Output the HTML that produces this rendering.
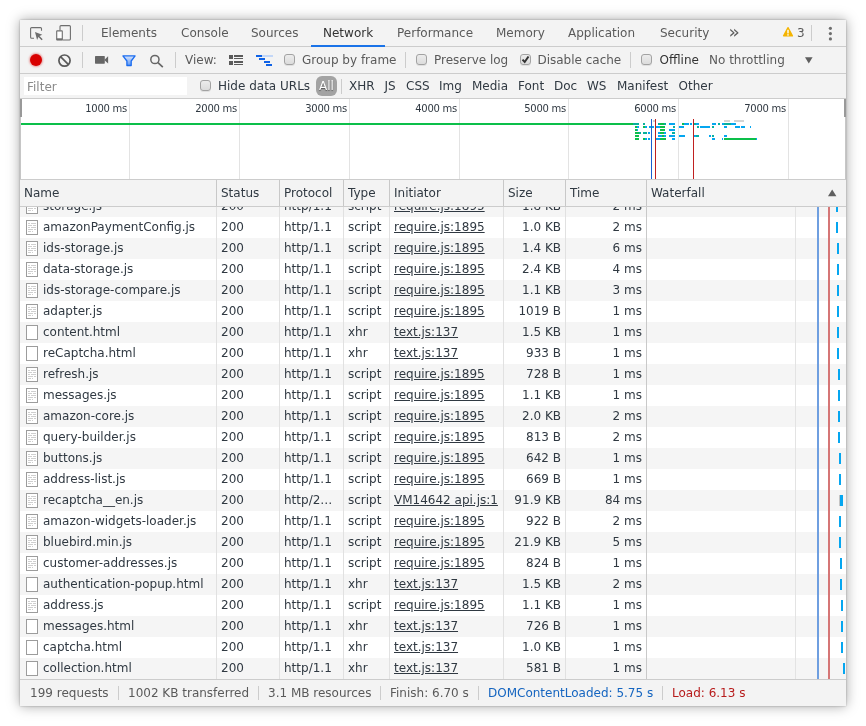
<!DOCTYPE html>
<html><head><meta charset="utf-8"><title>DevTools Network</title>
<style>
html,body{margin:0;padding:0;background:#fff;}
body{width:866px;height:726px;overflow:hidden;position:relative;font-family:"DejaVu Sans","Liberation Sans",sans-serif;font-size:12px;color:#303942;}
#win{will-change:transform;position:absolute;left:20px;top:20px;width:826px;height:686px;background:#fff;box-shadow:0 0 2px rgba(0,0,0,.28),0 0 12px rgba(0,0,0,.36);overflow:hidden;}
.abs{position:absolute;}
#tabs{position:absolute;left:0;top:0;width:826px;height:26px;background:#f3f3f3;border-bottom:1px solid #ccc;}
#tabs .t{position:absolute;top:0;height:26px;line-height:27px;color:#5a5a5a;white-space:nowrap;}
#tabs .t.sel{color:#333;}
#tabs .ul{position:absolute;left:291px;top:25px;width:74px;height:2px;background:#1a73e8;}
.vd{position:absolute;width:1px;background:#ccc;}
#tb{position:absolute;left:0;top:27px;width:826px;height:26px;background:#f3f3f3;border-bottom:1px solid #ccc;}
#tb .l{position:absolute;top:0;height:26px;line-height:27px;color:#5a5a5a;white-space:nowrap;}
.cb{position:absolute;width:11px;height:11px;border:1px solid #a2a2a2;border-radius:3px;background:linear-gradient(#ececec,#dcdcdc);box-shadow:0 1px 0 rgba(0,0,0,.08);box-sizing:border-box;}
#fb{position:absolute;left:0;top:54px;width:826px;height:24px;background:#f3f3f3;border-bottom:1px solid #ccc;}
#fb .l{position:absolute;top:0;height:24px;line-height:25px;color:#5a5a5a;white-space:nowrap;}
#fb .l.k{color:#303942;}
#fb .inp{position:absolute;left:4px;top:3px;width:163px;height:18px;background:#fff;color:#8b8b8b;line-height:20px;padding-left:3px;box-sizing:border-box;}
#fb .all{position:absolute;left:296px;top:2px;width:21px;height:20px;border-radius:6px;background:#a3a3a3;color:#fff;text-align:center;line-height:20px;text-shadow:0 1px 1px rgba(0,0,0,.5);}
#ov{position:absolute;left:0;top:79px;width:826px;height:80px;background:#fff;}
#ov .gl{position:absolute;top:0;width:1px;height:80px;background:#e3e3e3;}
#ov .tl{position:absolute;top:2px;height:16px;line-height:16px;font-size:10px;letter-spacing:-.25px;color:#303942;text-align:right;width:100px;}
.ob i{position:absolute;height:2px;display:block;}
#hd{position:absolute;left:0;top:159px;width:826px;height:26px;background:#f3f3f3;border-top:1px solid #ccc;border-bottom:1px solid #ccc;}
#hd span{position:absolute;top:0;height:26px;line-height:27px;border-left:1px solid #c8c8c8;padding-left:4px;box-sizing:border-box;color:#303942;}
#hd span:first-child{border-left:none;}
#rows{position:absolute;left:0;top:187px;width:826px;height:472px;overflow:hidden;background:#fff;}
#rows .inner{position:absolute;left:0;top:-11px;width:826px;}
.r{height:21px;line-height:21px;position:relative;white-space:nowrap;}
.r.g{background:#f5f5f5;}
.c{position:absolute;top:0;height:21px;box-sizing:border-box;border-left:1px solid #e1e1e1;padding:0 4px;overflow:hidden;}
.c.n{left:0;width:196px;border-left:none;padding-left:23px;}
.c.st{left:196px;width:63px;}
.c.pr{left:259px;width:64px;}
.c.ty{left:323px;width:46px;}
.c.in{left:369px;width:114px;}
.c.sz{left:483px;width:62px;text-align:right;}
.c.tm{left:545px;width:81px;text-align:right;}
.c.wf{left:626px;width:200px;border-left:1px solid #c9c9c9;padding:0;}
.c.wf b{position:absolute;top:5px;width:2px;height:11px;background:#05a6f0;}
.ic{position:absolute;left:6px;top:3px;width:12px;height:15px;box-sizing:border-box;border:1px solid #9c9c9c;background:#fff;}
.ic.s{background:linear-gradient(#cfcfcf,#cfcfcf) 1px 2px/2px 1px no-repeat,linear-gradient(#cfcfcf,#cfcfcf) 4px 2px/5px 1px no-repeat,linear-gradient(#cfcfcf,#cfcfcf) 1px 4px/4px 1px no-repeat,linear-gradient(#cfcfcf,#cfcfcf) 6px 4px/3px 1px no-repeat,linear-gradient(#cfcfcf,#cfcfcf) 1px 6px/2px 1px no-repeat,linear-gradient(#cfcfcf,#cfcfcf) 4px 6px/5px 1px no-repeat,linear-gradient(#cfcfcf,#cfcfcf) 1px 8px/5px 1px no-repeat,linear-gradient(#cfcfcf,#cfcfcf) 7px 8px/2px 1px no-repeat,linear-gradient(#cfcfcf,#cfcfcf) 1px 10px/3px 1px no-repeat,linear-gradient(#cfcfcf,#cfcfcf) 5px 10px/1px 1px no-repeat,#fff;}
u{text-decoration:underline;}
#st{position:absolute;left:0;top:659px;width:826px;height:26px;background:#f3f3f3;border-top:1px solid #ccc;}
#st span{position:absolute;top:0;height:26px;line-height:26px;color:#5a5a5a;white-space:nowrap;}
</style></head><body>
<div id="win">
<div id="tabs">
 <svg class="abs" style="left:9px;top:6px" width="16" height="16" viewBox="0 0 16 16"><path d="M12.5 4.8V2.6a1 1 0 0 0-1-1H2.6a1 1 0 0 0-1 1v8.6a1 1 0 0 0 1 1H5" fill="none" stroke="#6e6e6e" stroke-width="1.1"/><path d="M6 6l7.3 2.7-2.8 1.3 3.2 3.2-1.1 1.1-3.2-3.2-1.3 2.8z" fill="#6e6e6e"/></svg>
 <svg class="abs" style="left:35px;top:4px" width="18" height="18" viewBox="0 0 18 18"><path d="M5 6.5V2.6a1 1 0 0 1 1-1h8.4a1 1 0 0 1 1 1v12.4a1 1 0 0 1-1 1H7.5" fill="none" stroke="#6e6e6e" stroke-width="1.1"/><rect x="1.7" y="6.9" width="5.6" height="9.1" rx=".4" fill="#fff" stroke="#6e6e6e" stroke-width="1.1"/><rect x="1.7" y="14.3" width="5.6" height="1.8" fill="#6e6e6e"/></svg>
 <div class="vd" style="left:62px;top:5px;height:16px"></div>
 <div class="t" style="left:81px">Elements</div>
 <div class="t" style="left:161px">Console</div>
 <div class="t" style="left:231px">Sources</div>
 <div class="t sel" style="left:303px">Network</div>
 <div class="t" style="left:377px">Performance</div>
 <div class="t" style="left:476px">Memory</div>
 <div class="t" style="left:548px">Application</div>
 <div class="t" style="left:640px">Security</div>
 <div class="t" style="left:708.5px;font-size:18.5px;line-height:24px;color:#5f5f5f">»</div>
 <svg class="abs" style="left:762px;top:6px" width="12" height="12" viewBox="0 0 12 12"><path d="M6 1.8L10.3 9.8H1.7z" fill="#f4b400" stroke="#f4b400" stroke-width="1.6" stroke-linejoin="round"/><rect x="5.3" y="3.8" width="1.4" height="3.6" fill="#fff"/><rect x="5.3" y="8.2" width="1.4" height="1.4" fill="#fff"/></svg>
 <div class="t" style="left:777px">3</div>
 <div class="vd" style="left:791px;top:5px;height:16px"></div>
 <svg class="abs" style="left:808px;top:6px" width="5" height="15" viewBox="0 0 5 15"><circle cx="2.4" cy="2.3" r="1.6" fill="#6e6e6e"/><circle cx="2.4" cy="7.6" r="1.6" fill="#6e6e6e"/><circle cx="2.4" cy="12.9" r="1.6" fill="#6e6e6e"/></svg>
 <div class="ul"></div>
</div>
<div id="tb">
 <div class="abs" style="left:10px;top:7px;width:12px;height:12px;border-radius:50%;background:#d80000;box-shadow:0 0 2px 1px rgba(216,0,0,.35)"></div>
 <svg class="abs" style="left:37px;top:6px" width="15" height="15" viewBox="0 0 15 15"><circle cx="7.5" cy="7.6" r="5.6" fill="none" stroke="#5a5a5a" stroke-width="1.7"/><path d="M3.5 3.6l8 8" stroke="#5a5a5a" stroke-width="1.7"/></svg>
 <div class="vd" style="left:62px;top:5px;height:16px"></div>
 <svg class="abs" style="left:75px;top:8px" width="14" height="10" viewBox="0 0 14 10"><rect x="0" y="1" width="9.8" height="7.7" rx=".6" fill="#666"/><path d="M9.3 4.9L13.1 1.3v7.2z" fill="#666"/></svg>
 <svg class="abs" style="left:101px;top:6px" width="16" height="15" viewBox="0 0 16 15"><defs><linearGradient id="fg" x1="0" y1="0" x2="0" y2="1"><stop offset="0" stop-color="#d6e4fc"/><stop offset="1" stop-color="#5f97f2"/></linearGradient></defs><path d="M1.9 2.9H14.1L10.2 8V12.5H5.9V8z" fill="url(#fg)" stroke="#1a6cf0" stroke-width="1.3" stroke-linejoin="round"/></svg>
 <svg class="abs" style="left:129px;top:6px" width="15" height="15" viewBox="0 0 15 15"><circle cx="5.9" cy="6.5" r="4.1" fill="none" stroke="#666" stroke-width="1.5"/><path d="M9 9.7l4.8 4.5" stroke="#666" stroke-width="1.7"/></svg>
 <div class="vd" style="left:155px;top:5px;height:16px"></div>
 <div class="l" style="left:165px">View:</div>
 <svg class="abs" style="left:209px;top:8px" width="14" height="10" viewBox="0 0 14 10"><g fill="#5a5a5a"><rect x="0" y="0" width="4" height="4"/><rect x="5" y="0" width="9" height="2"/><rect x="5" y="3" width="9" height="1"/><rect x="0" y="6" width="4" height="4"/><rect x="5" y="6" width="9" height="2"/><rect x="5" y="9" width="9" height="1"/></g></svg>
 <svg class="abs" style="left:235px;top:7px" width="18" height="12" viewBox="0 0 18 12"><rect x="7" y="1" width="11" height="2" fill="#c3d7f7"/><g fill="#0f62e6"><rect x="1" y="1" width="6" height="2"/><rect x="4" y="4" width="6" height="2"/><rect x="9" y="7" width="6" height="2"/><rect x="11" y="10" width="6" height="2"/></g></svg>
 <div class="cb" style="left:264px;top:7px"></div>
 <div class="l" style="left:282px">Group by frame</div>
 <div class="vd" style="left:385px;top:5px;height:16px"></div>
 <div class="cb" style="left:396px;top:7px"></div>
 <div class="l" style="left:414px">Preserve log</div>
 <div class="cb" style="left:500px;top:7px"></div>
 <svg class="abs" style="left:501px;top:7px" width="10" height="10" viewBox="0 0 10 10"><path d="M1.5 5.6L3.7 8 7.5 2.5" fill="none" stroke="#333" stroke-width="2"/></svg>
 <div class="l" style="left:517.4px">Disable cache</div>
 <div class="vd" style="left:610px;top:5px;height:16px"></div>
 <div class="cb" style="left:621px;top:7px"></div>
 <div class="l" style="left:639.5px;color:#333">Offline</div>
 <div class="l" style="left:689px">No throttling</div>
 <svg class="abs" style="left:785px;top:10px" width="8" height="7" viewBox="0 0 8 7"><path d="M0 .2h7.6L3.8 6.4z" fill="#5f5f5f"/></svg>
</div>
<div id="fb">
 <div class="inp">Filter</div>
 <div class="cb" style="left:180px;top:6px"></div>
 <div class="l k" style="left:198px">Hide data URLs</div>
 <div class="all">All</div>
 <div class="vd" style="left:321px;top:5px;height:15px"></div>
 <div class="l k" style="left:329px">XHR</div>
 <div class="l k" style="left:364.5px">JS</div>
 <div class="l k" style="left:386px">CSS</div>
 <div class="l k" style="left:419px">Img</div>
 <div class="l k" style="left:452px">Media</div>
 <div class="l k" style="left:498px">Font</div>
 <div class="l k" style="left:534px">Doc</div>
 <div class="l k" style="left:567px">WS</div>
 <div class="l k" style="left:597px">Manifest</div>
 <div class="l k" style="left:658.5px">Other</div>
</div>
<div id="ov">
 <div class="gl" style="left:109px"></div><div class="gl" style="left:219px"></div><div class="gl" style="left:329px"></div><div class="gl" style="left:439px"></div><div class="gl" style="left:548px"></div><div class="gl" style="left:658px"></div><div class="gl" style="left:768px"></div>
 <div class="tl" style="left:7px">1000 ms</div><div class="tl" style="left:117px">2000 ms</div><div class="tl" style="left:227px">3000 ms</div><div class="tl" style="left:337px">4000 ms</div><div class="tl" style="left:446px">5000 ms</div><div class="tl" style="left:556px">6000 ms</div><div class="tl" style="left:666px">7000 ms</div>
 <div class="abs" style="left:0;top:0;width:2px;height:18px;background:#999"></div>
 <div class="abs" style="left:0;top:18px;width:1px;height:62px;background:#c6c6c6"></div>
 <div class="abs" style="left:824px;top:0;width:2px;height:18px;background:#999"></div>
 <div class="abs" style="left:825px;top:18px;width:1px;height:62px;background:#c6c6c6"></div>
 <div class="abs" style="left:1px;top:24px;width:612px;height:2px;background:#0cbf4a"></div>
 <div class="ob"><i style="left:613px;top:24px;width:6px;background:#08b09c"></i><i style="left:623px;top:24px;width:2px;background:#08b09c"></i><i style="left:638px;top:24px;width:2px;background:#08b09c"></i><i style="left:640px;top:24px;width:4px;background:#0cbf4a"></i><i style="left:644px;top:24px;width:2px;background:#08b09c"></i><i style="left:649px;top:24px;width:6px;background:#05a6f0"></i><i style="left:662px;top:24px;width:2px;background:#0cbf4a"></i><i style="left:664px;top:24px;width:5px;background:#05a6f0"></i><i style="left:670px;top:24px;width:2px;background:#05a6f0"></i><i style="left:674px;top:24px;width:2px;background:#08b09c"></i><i style="left:676px;top:24px;width:3px;background:#05a6f0"></i><i style="left:692px;top:24px;width:4px;background:#05a6f0"></i><i style="left:698px;top:24px;width:2px;background:#08b09c"></i><i style="left:702px;top:24px;width:2px;background:#05a6f0"></i><i style="left:704px;top:24px;width:7px;background:#08b09c"></i><i style="left:711px;top:24px;width:5px;background:#05a6f0"></i><i style="left:615px;top:27px;width:2px;background:#0cbf4a"></i><i style="left:617px;top:27px;width:2px;background:#05a6f0"></i><i style="left:623px;top:27px;width:2px;background:#0cbf4a"></i><i style="left:625px;top:27px;width:2px;background:#05a6f0"></i><i style="left:628.5px;top:27px;width:5px;background:#05a6f0"></i><i style="left:636px;top:27px;width:4px;background:#05a6f0"></i><i style="left:640px;top:27px;width:4.5px;background:#0cbf4a"></i><i style="left:653px;top:27px;width:2px;background:#08b09c"></i><i style="left:658.5px;top:27px;width:5.5px;background:#05a6f0"></i><i style="left:677px;top:27px;width:2px;background:#08b09c"></i><i style="left:680px;top:27px;width:10px;background:#05a6f0"></i><i style="left:692px;top:27px;width:2px;background:#08b09c"></i><i style="left:704.4px;top:27px;width:2.6px;background:#05a6f0"></i><i style="left:715px;top:27px;width:5px;background:#05a6f0"></i><i style="left:721.3px;top:27px;width:3.7px;background:#05a6f0"></i><i style="left:730px;top:27px;width:1px;background:#05a6f0"></i><i style="left:615px;top:30px;width:2px;background:#0cbf4a"></i><i style="left:617px;top:30px;width:1px;background:#05a6f0"></i><i style="left:640.4px;top:30px;width:5.1px;background:#0cbf4a"></i><i style="left:649px;top:30px;width:6px;background:#05a6f0"></i><i style="left:615px;top:33px;width:4px;background:#0cbf4a"></i><i style="left:619px;top:33px;width:2px;background:#08b09c"></i><i style="left:623px;top:33px;width:4px;background:#08b09c"></i><i style="left:628px;top:33px;width:2px;background:#05a6f0"></i><i style="left:638px;top:33px;width:2px;background:#05a6f0"></i><i style="left:640px;top:33px;width:4px;background:#0cbf4a"></i><i style="left:644px;top:33px;width:1.5px;background:#05a6f0"></i><i style="left:652px;top:33px;width:3px;background:#08b09c"></i><i style="left:615px;top:36px;width:3.5px;background:#0cbf4a"></i><i style="left:638px;top:36px;width:4px;background:#05a6f0"></i><i style="left:642px;top:36px;width:2px;background:#0cbf4a"></i><i style="left:644px;top:36px;width:1.5px;background:#05a6f0"></i><i style="left:649px;top:36px;width:6px;background:#05a6f0"></i><i style="left:659px;top:36px;width:6px;background:#05a6f0"></i><i style="left:674px;top:36px;width:2px;background:#05a6f0"></i><i style="left:676px;top:36px;width:3px;background:#08b09c"></i><i style="left:688.8px;top:36px;width:2.2px;background:#05a6f0"></i><i style="left:691.8px;top:36px;width:1.9px;background:#08b09c"></i><i style="left:704.4px;top:36px;width:2.6px;background:#05a6f0"></i><i style="left:615px;top:39px;width:4px;background:#0cbf4a"></i><i style="left:623px;top:39px;width:2px;background:#0cbf4a"></i><i style="left:625px;top:39px;width:2px;background:#05a6f0"></i><i style="left:628px;top:39px;width:2px;background:#05a6f0"></i><i style="left:636px;top:39px;width:4px;background:#05a6f0"></i><i style="left:640px;top:39px;width:6px;background:#0cbf4a"></i><i style="left:652px;top:39px;width:3px;background:#05a6f0"></i><i style="left:692.2px;top:39px;width:2.8px;background:#05a6f0"></i><i style="left:702.2px;top:39px;width:1.3px;background:#05a6f0"></i><i style="left:703.5px;top:39px;width:32.5px;background:#0cbf4a"></i><i style="left:736px;top:39px;width:1px;background:#05a6f0"></i><i style="left:632.7px;top:21px;width:1.9px;background:#cfcfcf"></i><i style="left:703.8px;top:21px;width:6.6px;background:#d4d4d4"></i><i style="left:714px;top:21px;width:10px;background:#d4d4d4"></i></div>
 <div class="abs" style="left:631px;top:20px;width:1px;height:60px;background:#1a5fd0"></div>
 <div class="abs" style="left:635px;top:20px;width:1px;height:60px;background:#c02020"></div>
 <div class="abs" style="left:673px;top:20px;width:1px;height:60px;background:#c02020"></div>
</div>
<div id="hd"><span style="left:0;width:196px">Name</span><span style="left:196px;width:63px">Status</span><span style="left:259px;width:64px">Protocol</span><span style="left:323px;width:46px">Type</span><span style="left:369px;width:114px">Initiator</span><span style="left:483px;width:62px">Size</span><span style="left:545px;width:81px">Time</span><span style="left:626px;width:200px">Waterfall<svg class="abs" style="left:181px;top:9px" width="9" height="8" viewBox="0 0 9 8"><path d="M0 7.2h8.4L4.2 .4z" fill="#5f5f5f"/></svg></span></div>
<div id="rows"><div class="inner">
<div class="r g"><span class="c n"><i class="ic s"></i>storage.js</span><span class="c st">200</span><span class="c pr">http/1.1</span><span class="c ty">script</span><span class="c in"><u>require.js:1895</u></span><span class="c sz">1.8 KB</span><span class="c tm">2 ms</span><span class="c wf"><b style="left:189px"></b></span></div>
<div class="r"><span class="c n"><i class="ic s"></i>amazonPaymentConfig.js</span><span class="c st">200</span><span class="c pr">http/1.1</span><span class="c ty">script</span><span class="c in"><u>require.js:1895</u></span><span class="c sz">1.0 KB</span><span class="c tm">2 ms</span><span class="c wf"><b style="left:189px"></b></span></div>
<div class="r g"><span class="c n"><i class="ic s"></i>ids-storage.js</span><span class="c st">200</span><span class="c pr">http/1.1</span><span class="c ty">script</span><span class="c in"><u>require.js:1895</u></span><span class="c sz">1.4 KB</span><span class="c tm">6 ms</span><span class="c wf"><b style="left:190px"></b></span></div>
<div class="r"><span class="c n"><i class="ic s"></i>data-storage.js</span><span class="c st">200</span><span class="c pr">http/1.1</span><span class="c ty">script</span><span class="c in"><u>require.js:1895</u></span><span class="c sz">2.4 KB</span><span class="c tm">4 ms</span><span class="c wf"><b style="left:190px"></b></span></div>
<div class="r g"><span class="c n"><i class="ic s"></i>ids-storage-compare.js</span><span class="c st">200</span><span class="c pr">http/1.1</span><span class="c ty">script</span><span class="c in"><u>require.js:1895</u></span><span class="c sz">1.1 KB</span><span class="c tm">3 ms</span><span class="c wf"><b style="left:190px"></b></span></div>
<div class="r"><span class="c n"><i class="ic s"></i>adapter.js</span><span class="c st">200</span><span class="c pr">http/1.1</span><span class="c ty">script</span><span class="c in"><u>require.js:1895</u></span><span class="c sz">1019 B</span><span class="c tm">1 ms</span><span class="c wf"><b style="left:190px"></b></span></div>
<div class="r g"><span class="c n"><i class="ic d"></i>content.html</span><span class="c st">200</span><span class="c pr">http/1.1</span><span class="c ty">xhr</span><span class="c in"><u>text.js:137</u></span><span class="c sz">1.5 KB</span><span class="c tm">1 ms</span><span class="c wf"><b style="left:190px"></b></span></div>
<div class="r"><span class="c n"><i class="ic d"></i>reCaptcha.html</span><span class="c st">200</span><span class="c pr">http/1.1</span><span class="c ty">xhr</span><span class="c in"><u>text.js:137</u></span><span class="c sz">933 B</span><span class="c tm">1 ms</span><span class="c wf"><b style="left:190px"></b></span></div>
<div class="r g"><span class="c n"><i class="ic s"></i>refresh.js</span><span class="c st">200</span><span class="c pr">http/1.1</span><span class="c ty">script</span><span class="c in"><u>require.js:1895</u></span><span class="c sz">728 B</span><span class="c tm">1 ms</span><span class="c wf"><b style="left:191px"></b></span></div>
<div class="r"><span class="c n"><i class="ic s"></i>messages.js</span><span class="c st">200</span><span class="c pr">http/1.1</span><span class="c ty">script</span><span class="c in"><u>require.js:1895</u></span><span class="c sz">1.1 KB</span><span class="c tm">1 ms</span><span class="c wf"><b style="left:191px"></b></span></div>
<div class="r g"><span class="c n"><i class="ic s"></i>amazon-core.js</span><span class="c st">200</span><span class="c pr">http/1.1</span><span class="c ty">script</span><span class="c in"><u>require.js:1895</u></span><span class="c sz">2.0 KB</span><span class="c tm">2 ms</span><span class="c wf"><b style="left:191px"></b></span></div>
<div class="r"><span class="c n"><i class="ic s"></i>query-builder.js</span><span class="c st">200</span><span class="c pr">http/1.1</span><span class="c ty">script</span><span class="c in"><u>require.js:1895</u></span><span class="c sz">813 B</span><span class="c tm">2 ms</span><span class="c wf"><b style="left:191px"></b></span></div>
<div class="r g"><span class="c n"><i class="ic s"></i>buttons.js</span><span class="c st">200</span><span class="c pr">http/1.1</span><span class="c ty">script</span><span class="c in"><u>require.js:1895</u></span><span class="c sz">642 B</span><span class="c tm">1 ms</span><span class="c wf"><b style="left:192px"></b></span></div>
<div class="r"><span class="c n"><i class="ic s"></i>address-list.js</span><span class="c st">200</span><span class="c pr">http/1.1</span><span class="c ty">script</span><span class="c in"><u>require.js:1895</u></span><span class="c sz">669 B</span><span class="c tm">1 ms</span><span class="c wf"><b style="left:192px"></b></span></div>
<div class="r g"><span class="c n"><i class="ic s"></i>recaptcha__en.js</span><span class="c st">200</span><span class="c pr">http/2…</span><span class="c ty">script</span><span class="c in"><u>VM14642 api.js:1</u></span><span class="c sz">91.9 KB</span><span class="c tm">84 ms</span><span class="c wf"><b style="left:193px;width:3px;box-shadow:-1px 0 0 #c4c4c4"></b></span></div>
<div class="r"><span class="c n"><i class="ic s"></i>amazon-widgets-loader.js</span><span class="c st">200</span><span class="c pr">http/1.1</span><span class="c ty">script</span><span class="c in"><u>require.js:1895</u></span><span class="c sz">922 B</span><span class="c tm">2 ms</span><span class="c wf"><b style="left:192px"></b></span></div>
<div class="r g"><span class="c n"><i class="ic s"></i>bluebird.min.js</span><span class="c st">200</span><span class="c pr">http/1.1</span><span class="c ty">script</span><span class="c in"><u>require.js:1895</u></span><span class="c sz">21.9 KB</span><span class="c tm">5 ms</span><span class="c wf"><b style="left:192px"></b></span></div>
<div class="r"><span class="c n"><i class="ic s"></i>customer-addresses.js</span><span class="c st">200</span><span class="c pr">http/1.1</span><span class="c ty">script</span><span class="c in"><u>require.js:1895</u></span><span class="c sz">824 B</span><span class="c tm">1 ms</span><span class="c wf"><b style="left:193px"></b></span></div>
<div class="r g"><span class="c n"><i class="ic d"></i>authentication-popup.html</span><span class="c st">200</span><span class="c pr">http/1.1</span><span class="c ty">xhr</span><span class="c in"><u>text.js:137</u></span><span class="c sz">1.5 KB</span><span class="c tm">2 ms</span><span class="c wf"><b style="left:193px"></b></span></div>
<div class="r"><span class="c n"><i class="ic s"></i>address.js</span><span class="c st">200</span><span class="c pr">http/1.1</span><span class="c ty">script</span><span class="c in"><u>require.js:1895</u></span><span class="c sz">1.1 KB</span><span class="c tm">1 ms</span><span class="c wf"><b style="left:194px"></b></span></div>
<div class="r g"><span class="c n"><i class="ic d"></i>messages.html</span><span class="c st">200</span><span class="c pr">http/1.1</span><span class="c ty">xhr</span><span class="c in"><u>text.js:137</u></span><span class="c sz">726 B</span><span class="c tm">1 ms</span><span class="c wf"><b style="left:194px"></b></span></div>
<div class="r"><span class="c n"><i class="ic d"></i>captcha.html</span><span class="c st">200</span><span class="c pr">http/1.1</span><span class="c ty">xhr</span><span class="c in"><u>text.js:137</u></span><span class="c sz">1.0 KB</span><span class="c tm">1 ms</span><span class="c wf"><b style="left:194px"></b></span></div>
<div class="r g"><span class="c n"><i class="ic d"></i>collection.html</span><span class="c st">200</span><span class="c pr">http/1.1</span><span class="c ty">xhr</span><span class="c in"><u>text.js:137</u></span><span class="c sz">581 B</span><span class="c tm">1 ms</span><span class="c wf"><b style="left:196px"></b></span></div>
</div>
<div class="abs" style="left:775px;top:0;width:1px;height:473px;background:#e3e3e3"></div>
<div class="abs" style="left:797px;top:0;width:2px;height:473px;background:#6f9fe0"></div>
<div class="abs" style="left:808px;top:0;width:2px;height:473px;background:#d57676"></div>
</div>
<div id="st">
 <span style="left:10px">199 requests</span>
 <div class="vd" style="left:98px;top:6px;height:14px"></div>
 <span style="left:108px">1002 KB transferred</span>
 <div class="vd" style="left:238px;top:6px;height:14px"></div>
 <span style="left:248px">3.1 MB resources</span>
 <div class="vd" style="left:360px;top:6px;height:14px"></div>
 <span style="left:370px">Finish: 6.70 s</span>
 <div class="vd" style="left:458px;top:6px;height:14px"></div>
 <span style="left:468px;color:#1565c0">DOMContentLoaded: 5.75 s</span>
 <div class="vd" style="left:642px;top:6px;height:14px"></div>
 <span style="left:652px;color:#b71c1c">Load: 6.13 s</span>
</div>
</div>
</body></html>
